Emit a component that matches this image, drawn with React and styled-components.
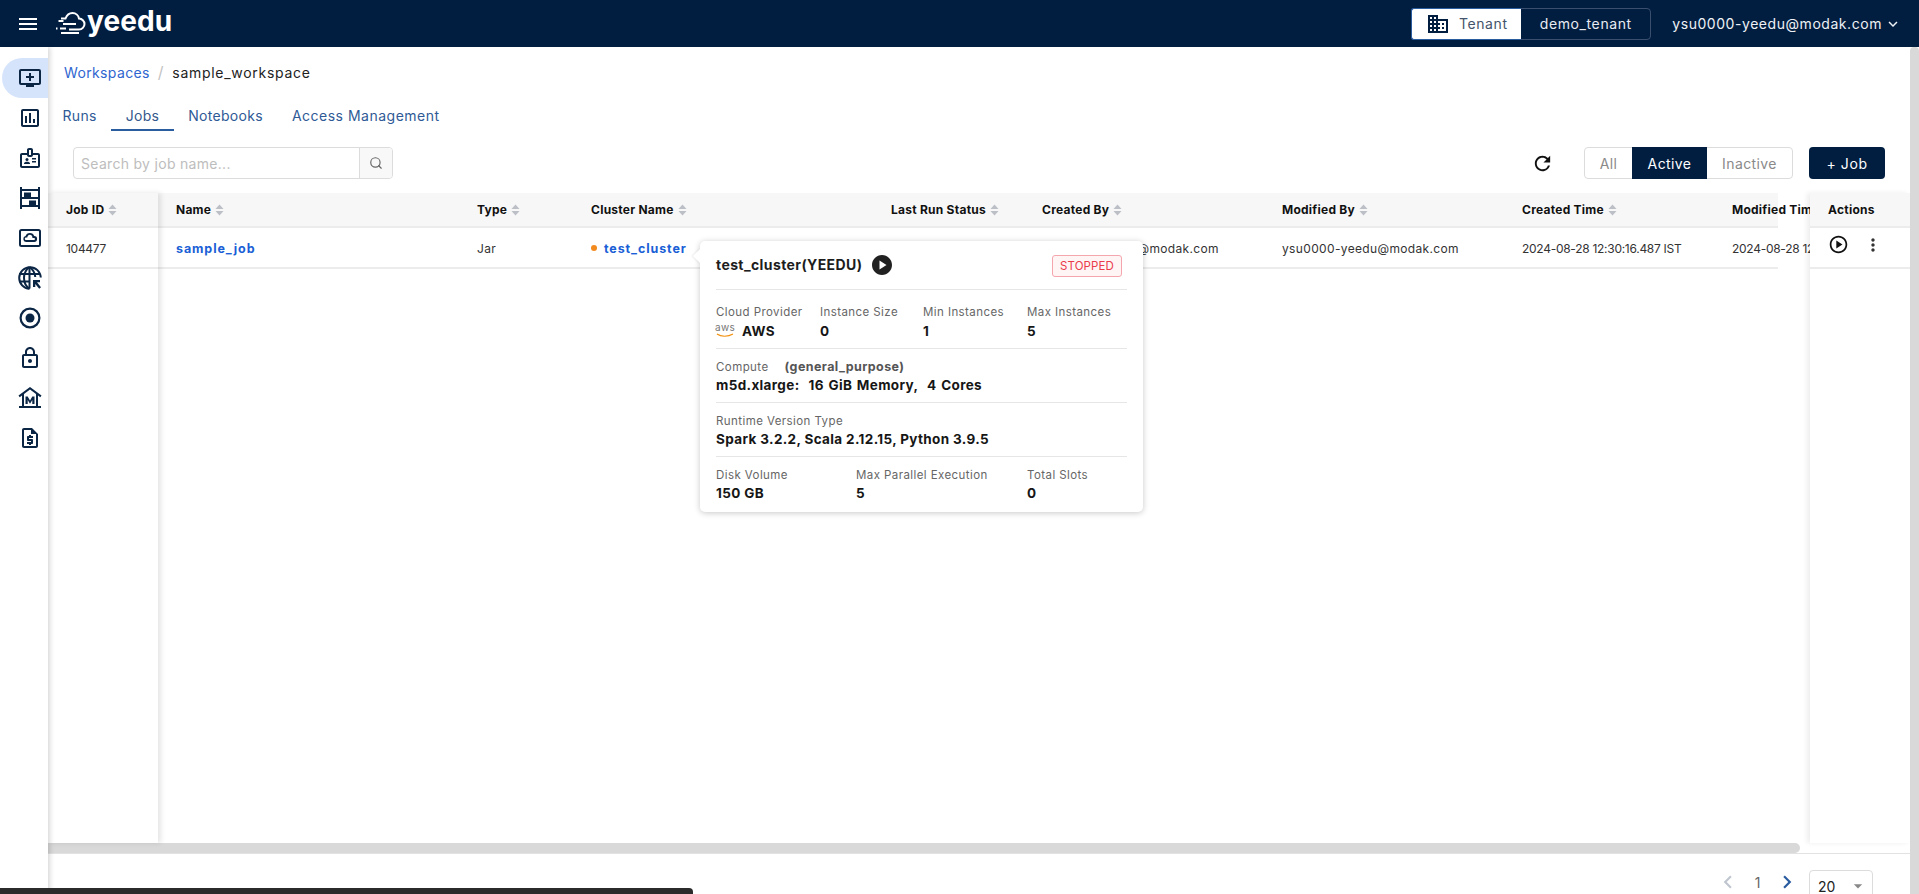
import React from "react";
import styled, { createGlobalStyle } from "styled-components";
import {
  MdMenu,
  MdOutlineAddToQueue,
  MdOutlineAssessment,
  MdOutlineBadge,
  MdOutlineLock,
  MdOutlineRequestQuote,
  MdRefresh,
  MdOutlinePlayCircle,
  MdMoreVert,
  MdPlayCircle,
  MdDomain,
  MdKeyboardArrowDown,
  MdChevronLeft,
  MdChevronRight,
  MdArrowDropDown,
} from "react-icons/md";
import { Search } from "lucide-react";

const NAVY = "#011e41";
const FONT = `"Inter", "Open Sans", sans-serif`;

const GlobalStyle = createGlobalStyle`
  * { box-sizing: border-box; }
  html, body { margin: 0; height: 100%; overflow: hidden; background: #fff; }
  body { font-family: ${FONT}; color: #222; }
`;

const Page = styled.div`
  height: 100vh;
  display: flex;
  flex-direction: column;
  overflow: hidden;
`;

/* top bar */
const TopBar = styled.header`
  height: 47px;
  flex: none;
  background: ${NAVY};
  color: #fff;
  display: flex;
  align-items: center;
  padding: 0 17px 0 16px;
`;

const MenuButton = styled.span`
  display: flex;
  font-size: 24px;
`;

const Logo = styled.div`
  display: flex;
  align-items: center;
  margin-left: 15px;
  font-size: 28px;
  font-weight: 700;
  line-height: 1;
  letter-spacing: 0.1px;
  span { margin: -5px 0 0 1px; }
`;

const TenantBox = styled.div`
  margin-left: auto;
  display: flex;
  height: 32px;
  width: 240px;
  border: 1px solid #3a4f6e;
  border-radius: 4px;
  font-size: 14px;
  letter-spacing: 0.6px;
`;

const TenantLabel = styled.div`
  width: 110px;
  background: #fff;
  color: #44546a;
  border-radius: 3px 0 0 3px;
  border: 1px solid #2a5ca0;
  border-right: 0;
  margin: -1px 0 -1px -1px;
  display: flex;
  align-items: center;
  justify-content: center;
  gap: 9px;
  svg { color: ${NAVY}; font-size: 24px; }
`;

const TenantName = styled.div`
  flex: 1;
  display: flex;
  align-items: center;
  justify-content: center;
  color: #e8ecf2;
`;

const UserMenu = styled.div`
  display: flex;
  align-items: center;
  gap: 2px;
  margin-left: 21px;
  font-size: 14px;
  letter-spacing: 0.55px;
  color: #eef1f5;
  svg { font-size: 18px; }
`;

/* body */
const Body = styled.div`
  flex: 1;
  min-height: 0;
  display: flex;
`;

const Sidebar = styled.nav`
  width: 48px;
  flex: none;
  position: relative;
  z-index: 3;
  background: #fff;
  box-shadow: 2px 0 5px rgba(0, 0, 0, 0.16);
  padding-top: 11px;
  display: flex;
  flex-direction: column;
`;

const SideItem = styled.div`
  height: 40px;
  margin-left: 2px;
  padding-left: 16px;
  display: flex;
  align-items: center;
  color: #0b2545;
  font-size: 24px;
  border-radius: 20px 0 0 20px;
  background: ${(p) => (p.$active ? "#d6e4fb" : "transparent")};
`;

const Main = styled.main`
  flex: 1;
  min-width: 0;
  display: flex;
  flex-direction: column;
`;

const Breadcrumb = styled.div`
  height: 50px;
  margin-bottom: 2px;
  flex: none;
  display: flex;
  align-items: center;
  padding-left: 16px;
  font-size: 14px;
  letter-spacing: 0.72px;
  color: #222;
`;

const CrumbLink = styled.a`
  color: #2f66d0;
  letter-spacing: 0.36px;
`;

const CrumbSep = styled.span`
  color: #c4c4c4;
  margin: 0 8px;
  font-size: 16px;
`;

const Tabs = styled.div`
  height: 32px;
  flex: none;
  display: flex;
`;

const Tab = styled.div`
  padding: 2px 14.5px 0;
  display: flex;
  align-items: center;
  font-size: 14px;
  letter-spacing: ${(p) => p.$ls ?? 0.3}px;
  color: ${(p) => (p.$active ? "#34588c" : "#2f5a96")};
  border-bottom: 2px solid ${(p) => (p.$active ? "#2a5ca0" : "transparent")};
`;

const Toolbar = styled.div`
  height: 32px;
  flex: none;
  margin-top: 16px;
  padding: 0 25px;
  display: flex;
  align-items: center;
`;

const SearchBox = styled.div`
  width: 320px;
  height: 32px;
  display: flex;
  border: 1px solid #dcdcdc;
  border-radius: 4px;
`;

const SearchInput = styled.input`
  flex: 1;
  min-width: 0;
  border: 0;
  outline: 0;
  background: transparent;
  padding: 0 7px;
  font: 400 14px ${FONT};
  letter-spacing: 0.3px;
  &::placeholder { color: #bdbdbd; }
`;

const SearchButton = styled.div`
  width: 33px;
  display: flex;
  align-items: center;
  justify-content: center;
  background: #f8f8f8;
  border-left: 1px solid #dcdcdc;
  border-radius: 0 3px 3px 0;
  color: #666;
`;

const RefreshButton = styled.span`
  margin-left: auto;
  display: flex;
  font-size: 23px;
  color: #111;
`;

const Segmented = styled.div`
  margin-left: 30px;
  display: flex;
  height: 32px;
  border: 1px solid #dcdcdc;
  border-radius: 4px;
  font-size: 14px;
  letter-spacing: 0.4px;
`;

const Segment = styled.div`
  width: ${(p) => p.$w}px;
  display: flex;
  align-items: center;
  justify-content: center;
  color: ${(p) => (p.$active ? "#fff" : "#8a8a8a")};
  background: ${(p) => (p.$active ? NAVY : "transparent")};
  margin: ${(p) => (p.$active ? "-1px 0" : "0")};
`;

const AddButton = styled.div`
  margin-left: 16px;
  width: 76px;
  height: 32px;
  background: ${NAVY};
  color: #fff;
  border-radius: 4px;
  display: flex;
  align-items: center;
  justify-content: center;
  font-size: 14px;
  letter-spacing: 0.6px;
`;

/* table */
const TableFrame = styled.div`
  position: relative;
  flex: 1;
  min-height: 0;
  margin-top: 14px;
  display: flex;
`;

const FrozenColumn = styled.div`
  width: 110px;
  flex: none;
  position: relative;
  z-index: 2;
  background: #fff;
  box-shadow: 3px 0 5px rgba(0, 0, 0, 0.1);
`;

const ActionsColumn = styled.div`
  width: 100px;
  flex: none;
  position: relative;
  z-index: 2;
  background: #fff;
  box-shadow: -3px 0 5px rgba(0, 0, 0, 0.07);
`;

const ScrollArea = styled.div`
  flex: 1;
  min-width: 0;
  overflow: hidden;
`;

const HeadRow = styled.div`
  height: 35px;
  background: #f7f7f7;
  border-bottom: 2px solid #ececec;
  display: ${(p) => (p.$grid ? "grid" : "flex")};
  grid-template-columns: 301px 114px 300px 151px 240px 240px 210px 240px;
  padding-left: 18px;
  width: ${(p) => (p.$grid ? "1620px" : "auto")};
  align-items: center;
`;

const DataRow = styled.div`
  height: 41px;
  padding-top: 1px;
  border-bottom: 2px solid #ececec;
  display: ${(p) => (p.$grid ? "grid" : "flex")};
  grid-template-columns: 301px 114px 300px 151px 240px 240px 210px 240px;
  padding-left: 18px;
  width: ${(p) => (p.$grid ? "1620px" : "auto")};
  align-items: center;
`;

const HeadCell = styled.div`
  display: flex;
  align-items: center;
  gap: 4px;
  font-size: 12px;
  font-weight: 700;
  letter-spacing: 0.25px;
  color: #111;
  white-space: nowrap;
`;

const Cell = styled.div`
  font-size: 12px;
  letter-spacing: ${(p) => (p.$num ? -0.28 : 0.35)}px;
  color: #333;
  white-space: nowrap;
  display: flex;
  align-items: center;
`;

const BlueLink = styled.a`
  color: #1a5fd6;
  font-size: 12.5px;
  font-weight: 700;
  letter-spacing: 0.9px;
`;

const StatusDot = styled.i`
  width: 6px;
  height: 6px;
  border-radius: 50%;
  background: #f28a1e;
  margin-right: 7px;
`;

const ActionIcons = styled.div`
  display: flex;
  align-items: center;
  gap: 14px;
  margin-top: -7px;
  svg:first-child { font-size: 21px; color: #111; }
  svg:last-child { font-size: 20px; color: #333; }
`;

/* cluster popover */
const Popover = styled.div`
  position: absolute;
  left: 652px;
  top: 48px;
  width: 443px;
  height: 271px;
  z-index: 4;
  background: #fff;
  border-radius: 5px;
  padding: 14px 16px 0;
  box-shadow: 0 1px 6px rgba(0, 0, 0, 0.22);
  &::before {
    content: "";
    position: absolute;
    left: -5px;
    top: 10px;
    width: 10px;
    height: 10px;
    background: #fff;
    transform: rotate(45deg);
    box-shadow: -1px 1px 2px rgba(0, 0, 0, 0.07);
  }
`;

const PopHead = styled.div`
  height: 35px;
  display: flex;
  align-items: flex-start;
  font-size: 14px;
  font-weight: 700;
  letter-spacing: 0.4px;
  color: #1d1d1d;
  border-bottom: 1px solid #e6e6e6;
  svg { font-size: 24px; margin: -2px 0 0 8px; color: #212121; }
`;

const PopTitle = styled.span`
  line-height: 20px;
`;

const StateBadge = styled.span`
  margin: 0 5px 0 auto;
  width: 70px;
  height: 22px;
  border: 1px solid #f5a5ad;
  border-radius: 3px;
  background: #fff5f5;
  color: #ea3b4b;
  font-size: 11.5px;
  font-weight: 400;
  letter-spacing: 0.1px;
  display: flex;
  align-items: center;
  justify-content: center;
`;

const PopSection = styled.div`
  height: ${(p) => p.$h || 54}px;
  padding-top: ${(p) => p.$pad || 10}px;
  border-bottom: ${(p) => (p.$last ? "0" : "1px solid #e6e6e6")};
  display: grid;
  grid-template-columns: ${(p) => p.$cols || "1fr"};
  align-content: start;
`;

const Label = styled.div`
  font-size: 11.5px;
  line-height: 16px;
  letter-spacing: 0.42px;
  color: #666;
  white-space: nowrap;
`;

const Strong = styled.b`
  font-size: 12.5px;
  font-weight: 700;
  color: #555;
  margin-left: 16px;
`;

const Value = styled.div`
  font-size: 13.5px;
  line-height: 20px;
  font-weight: 700;
  letter-spacing: 0.36px;
  word-spacing: ${(p) => p.$ws || 0}px;
  color: #161616;
  white-space: pre;
  display: flex;
  align-items: center;
  margin-top: ${(p) => p.$mt || 0}px;
`;

const AwsMark = styled.span`
  display: inline-flex;
  flex-direction: column;
  align-items: center;
  width: 18px;
  margin: -2px 8px 0 0;
  font-size: 10px;
  line-height: 9px;
  font-weight: 400;
  color: #777;
  svg { margin-top: 1px; }
`;

/* bottom */
const ScrollTrack = styled.div`
  height: 11px;
  flex: none;
  border-bottom: 1px solid #e2e2e2;
`;

const ScrollThumb = styled.div`
  width: 1752px;
  height: 10px;
  background: #d9d9d9;
  border-radius: 0 5px 5px 0;
`;

const Footer = styled.div`
  height: 40px;
  flex: none;
  overflow: hidden;
  padding: 16px 37px 0 0;
  display: flex;
  justify-content: flex-end;
`;

const Pager = styled.div`
  display: flex;
  align-items: center;
  height: 24px;
  font-size: 14px;
  color: #666;
`;

const PagerArrow = styled.span`
  display: flex;
  font-size: 26px;
  color: ${(p) => (p.$off ? "#c0c6d0" : "#2a5ca0")};
`;

const PagerNum = styled.span`
  width: 33px;
  text-align: center;
`;

const PageSize = styled.div`
  margin-left: 9px;
  width: 64px;
  height: 32px;
  border: 1px solid #dcdcdc;
  border-radius: 4px;
  padding: 0 4px 0 8px;
  display: flex;
  align-items: center;
  justify-content: space-between;
  font-size: 14px;
  color: #222;
  svg { font-size: 20px; color: #888; }
`;

const PageScrollbar = styled.div`
  width: 9px;
  flex: none;
  background: #d9d9d9;
  border-radius: 4px 4px 0 0;
`;

const BottomBar = styled.div`
  position: fixed;
  left: 0;
  bottom: 0;
  width: 693px;
  height: 6px;
  z-index: 6;
  background: #2b2b2b;
  border-radius: 0 4px 0 0;
`;

const SortCaret = () => (
  <svg width="9" height="12" viewBox="0 0 9 12" fill="#bcbfc6">
    <path d="M4.5 0.5 8.5 5H.5z" />
    <path d="M4.5 11.5.5 7h8z" />
  </svg>
);

const CloudLogo = () => (
  <svg width="31" height="26" viewBox="0 0 31 26" fill="none" stroke="#fff" strokeWidth="2">
    <path d="M6 7.5h4.5C12 3.5 15 2 17.5 2c3.5 0 6 2.5 6.5 5.5 3 .2 5.5 2.6 5.5 5.5 0 3-2.5 5.5-5.5 5.5H14" />
    <path d="M8 13h13M1 17.5h1.5M5 17.5h6M6 22h18" />
    <path d="M3.500 10h5" />
  </svg>
);

const ShelvesIcon = () => (
  <svg width="24" height="24" viewBox="0 0 24 24" fill="#0b2545">
    <path d="M2 1h2v2h16V1h2v22h-2v-2H4v2H2zm2 4v6h16V5zm0 8v6h16v-6z" />
    <path d="M6 6.500h7v4.500H6zM11 14.500h7V19h-7z" />
  </svg>
);

const CloudBoxIcon = () => (
  <svg width="24" height="24" viewBox="0 0 24 24" fill="#0b2545">
    <path d="M3.500 3h17A2.500 2.500 0 0 1 23 5.500v13a2.500 2.500 0 0 1-2.500 2.500h-17A2.500 2.500 0 0 1 1 18.500v-13A2.500 2.500 0 0 1 3.500 3zm0 2a.5.5 0 0 0-.5.5v13a.5.5 0 0 0 .5.5h17a.5.5 0 0 0 .5-.5v-13a.5.5 0 0 0-.5-.5z" />
    <path d="M8 16a3 3 0 0 1-.4-5.900A4.500 4.500 0 0 1 16.200 10 3 3 0 0 1 16 16zm0-2h8a1 1 0 0 0 0-2h-1.600v-1a2.500 2.500 0 0 0-4.900-.4l-.2 1H8a1.200 1.200 0 0 0 0 2.400z" />
  </svg>
);

const GlobeCursorIcon = () => (
  <svg width="24" height="24" viewBox="0 0 24 24" fill="none" stroke="#0b2545" strokeWidth="2">
    <path d="M22.800 11.500A10.800 10.800 0 1 0 11.500 22.800" />
    <path d="M11.500 1v21.500M1 8h21M1 15.500h10" />
    <path d="M11.500 1C7.500 4 6 8 6 12s1.500 8 5.500 10.800M11.500 1c4 3 5.500 6.500 5.800 10" />
    <path d="M15 14h7v2.300h-3l4 5-1.800 1.400-3.900-4.800v3h-2.300z" fill="#0b2545" stroke="none" />
  </svg>
);

const TargetIcon = () => (
  <svg width="24" height="24" viewBox="0 0 24 24" fill="#0b2545">
    <path d="M12 1.500a10.500 10.500 0 1 0 0 21 10.500 10.500 0 0 0 0-21zm0 2.200a8.300 8.300 0 1 1 0 16.600 8.300 8.300 0 0 1 0-16.600z" />
    <circle cx="12" cy="12" r="4.500" />
  </svg>
);

const BankIcon = () => (
  <svg width="24" height="24" viewBox="0 0 24 24" fill="#0b2545">
    <path d="M12 1 0.500 9.500l1.200 1.700L4 9.500V20H1v2h22v-2h-3V9.500l2.300 1.700 1.200-1.700zM6 20V8l6-4.500L18 8v12z" />
    <path d="M7.500 10.500h2.200l2.300 4 2.300-4h2.200v7.500h-2.200v-4l-2.300 3.800-2.300-3.800v4H7.500z" />
  </svg>
);

const columns = [
  "Name",
  "Type",
  "Cluster Name",
  "Last Run Status",
  "Created By",
  "Modified By",
  "Created Time",
  "Modified Time",
];

export default function App() {
  return (
    <Page>
      <GlobalStyle />
      <TopBar>
        <MenuButton><MdMenu /></MenuButton>
        <Logo>
          <CloudLogo />
          <span>yeedu</span>
        </Logo>
        <TenantBox>
          <TenantLabel><MdDomain />Tenant</TenantLabel>
          <TenantName>demo_tenant</TenantName>
        </TenantBox>
        <UserMenu>
          ysu0000-yeedu@modak.com
          <MdKeyboardArrowDown />
        </UserMenu>
      </TopBar>
      <Body>
        <Sidebar>
          <SideItem $active><MdOutlineAddToQueue /></SideItem>
          <SideItem><MdOutlineAssessment /></SideItem>
          <SideItem><MdOutlineBadge /></SideItem>
          <SideItem><ShelvesIcon /></SideItem>
          <SideItem><CloudBoxIcon /></SideItem>
          <SideItem><GlobeCursorIcon /></SideItem>
          <SideItem><TargetIcon /></SideItem>
          <SideItem><MdOutlineLock /></SideItem>
          <SideItem><BankIcon /></SideItem>
          <SideItem><MdOutlineRequestQuote /></SideItem>
        </Sidebar>
        <Main>
          <Breadcrumb>
            <CrumbLink>Workspaces</CrumbLink>
            <CrumbSep>/</CrumbSep>
            sample_workspace
          </Breadcrumb>
          <Tabs>
            <Tab>Runs</Tab>
            <Tab $active>Jobs</Tab>
            <Tab>Notebooks</Tab>
            <Tab $ls={0.5}>Access Management</Tab>
          </Tabs>
          <Toolbar>
            <SearchBox>
              <SearchInput placeholder="Search by job name..." />
              <SearchButton><Search size={14} /></SearchButton>
            </SearchBox>
            <RefreshButton><MdRefresh /></RefreshButton>
            <Segmented>
              <Segment $w={47}>All</Segment>
              <Segment $w={75} $active>Active</Segment>
              <Segment $w={85}>Inactive</Segment>
            </Segmented>
            <AddButton>+ Job</AddButton>
          </Toolbar>
          <TableFrame>
            <FrozenColumn>
              <HeadRow>
                <HeadCell>Job ID <SortCaret /></HeadCell>
              </HeadRow>
              <DataRow><Cell $num>104477</Cell></DataRow>
            </FrozenColumn>
            <ScrollArea>
              <HeadRow $grid>
                {columns.map((c) => (
                  <HeadCell key={c}>{c} <SortCaret /></HeadCell>
                ))}
              </HeadRow>
              <DataRow $grid>
                <Cell><BlueLink>sample_job</BlueLink></Cell>
                <Cell>Jar</Cell>
                <Cell><StatusDot /><BlueLink>test_cluster</BlueLink></Cell>
                <Cell />
                <Cell>ysu0000-yeedu@modak.com</Cell>
                <Cell>ysu0000-yeedu@modak.com</Cell>
                <Cell $num>2024-08-28 12:30:16.487 IST</Cell>
                <Cell $num>2024-08-28 12:30:16.487 IST</Cell>
              </DataRow>
            </ScrollArea>
            <ActionsColumn>
              <HeadRow>
                <HeadCell>Actions</HeadCell>
              </HeadRow>
              <DataRow>
                <ActionIcons>
                  <MdOutlinePlayCircle />
                  <MdMoreVert />
                </ActionIcons>
              </DataRow>
            </ActionsColumn>
            <Popover>
              <PopHead>
                <PopTitle>test_cluster(YEEDU)</PopTitle>
                <MdPlayCircle />
                <StateBadge>STOPPED</StateBadge>
              </PopHead>
              <PopSection $h={59} $pad={14} $cols="104px 103px 104px 1fr">
                <Label>Cloud Provider</Label>
                <Label>Instance Size</Label>
                <Label>Min Instances</Label>
                <Label>Max Instances</Label>
                <Value $mt={1}>
                  <AwsMark>
                    aws
                    <svg width="18" height="5" viewBox="0 0 18 5" fill="none" stroke="#f29111" strokeWidth="1.200">
                      <path d="M1 1c4 3 11 3 16 0" />
                    </svg>
                  </AwsMark>
                  AWS
                </Value>
                <Value $mt={1}>0</Value>
                <Value $mt={1}>1</Value>
                <Value $mt={1}>5</Value>
              </PopSection>
              <PopSection>
                <Label>Compute<Strong>(general_purpose)</Strong></Label>
                <Value $ws={1}>{"m5d.xlarge:  16 GiB Memory,  4 Cores"}</Value>
              </PopSection>
              <PopSection>
                <Label>Runtime Version Type</Label>
                <Value>Spark 3.2.2, Scala 2.12.15, Python 3.9.5</Value>
              </PopSection>
              <PopSection $last $cols="140px 171px 1fr">
                <Label>Disk Volume</Label>
                <Label>Max Parallel Execution</Label>
                <Label>Total Slots</Label>
                <Value>150 GB</Value>
                <Value>5</Value>
                <Value>0</Value>
              </PopSection>
            </Popover>
          </TableFrame>
          <ScrollTrack><ScrollThumb /></ScrollTrack>
          <Footer>
            <Pager>
              <PagerArrow $off><MdChevronLeft /></PagerArrow>
              <PagerNum>1</PagerNum>
              <PagerArrow><MdChevronRight /></PagerArrow>
            </Pager>
            <PageSize>20<MdArrowDropDown /></PageSize>
          </Footer>
        </Main>
        <PageScrollbar />
      </Body>
      <BottomBar />
    </Page>
  );
}
